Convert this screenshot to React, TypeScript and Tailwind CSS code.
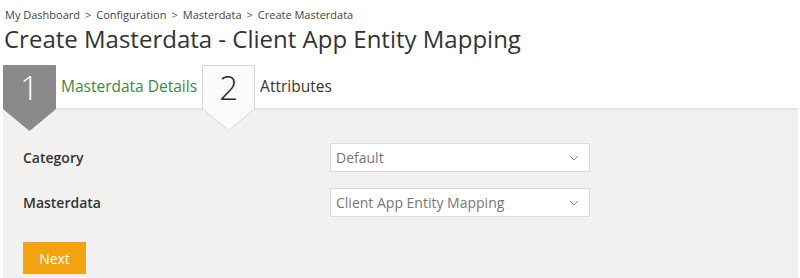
import React from 'react'

const font = { fontFamily: '"Open Sans", "Noto Sans", sans-serif' }

const crumbs = ['My Dashboard', 'Configuration', 'Masterdata', 'Create Masterdata']

function StepBadge({ num, active }: { num: string; active: boolean }) {
  return (
    <div className="relative w-[53px] h-[66px] shrink-0">
      <svg width="53" height="66" viewBox="0 0 53 66" className="absolute inset-0">
        <polygon
          points="0.5,0.5 52.5,0.5 52.5,44 26.5,65.5 0.5,44"
          fill={active ? '#8a8a8a' : '#fbfbfb'}
          stroke={active ? '#8a8a8a' : '#d6d6d6'}
          strokeWidth="1"
        />
      </svg>
      <div
        className={`absolute left-0 top-[3px] w-[53px] text-center text-[33px] font-light leading-[40px] ${
          active ? 'text-white' : 'text-[#2b2b2b]'
        }`}
      >
        {num}
      </div>
    </div>
  )
}

function Select({ value }: { value: string }) {
  return (
    <div className="w-[260px] h-[29px] bg-white border border-[#dcdcdc] flex items-center justify-between pl-[5px] pr-[10px]">
      <span className="text-[14px] text-[#777]">{value}</span>
      <svg width="10" height="6" viewBox="0 0 10 6">
        <path d="M1 1 L5 5 L9 1" fill="none" stroke="#888" strokeWidth="1" />
      </svg>
    </div>
  )
}

export default function App() {
  return (
    <div className="w-[800px] h-[278px] overflow-hidden bg-white text-[#333]" style={font}>
      <div className="pl-[5px] pt-[7px] text-[11px] leading-[16px] text-[#444] flex gap-[5px]">
        {crumbs.map((c, i) => (
          <span key={i} className="flex gap-[5px]">
            {i > 0 && <span className="text-[#555]">&gt;</span>}
            {c}
          </span>
        ))}
      </div>
      <h1 className="pl-[4px] pt-[1px] text-[24px] leading-[30px] font-normal text-[#333]">
        Create Masterdata - Client App Entity Mapping
      </h1>
      <div className="relative z-10 flex items-start pl-[3px] mt-[11px]">
        <StepBadge num="1" active />
        <div className="h-[44px] flex items-center pl-[5px] pr-[5px] text-[15.5px] text-[#3d8a3d]">
          Masterdata Details
        </div>
        <StepBadge num="2" active={false} />
        <div className="h-[44px] flex items-center pl-[5px] text-[15.5px] text-[#333]">
          Attributes
        </div>
      </div>
      <div className="mt-[-23px] ml-[3px] mr-[2px] h-[200px] bg-[#f2f1f0] border-t-2 border-[#e6e5e3] pl-[20px] pt-[33px]">
        <div className="flex flex-col gap-[16px]">
          <div className="flex items-center">
            <div className="w-[307px] text-[14px] font-semibold text-[#333]">Category</div>
            <Select value="Default" />
          </div>
          <div className="flex items-center">
            <div className="w-[307px] text-[14px] font-semibold text-[#333]">Masterdata</div>
            <Select value="Client App Entity Mapping" />
          </div>
        </div>
        <button className="mt-[25px] w-[63px] h-[32px] bg-[#f2a30f] text-white text-[14px]">
          Next
        </button>
      </div>
    </div>
  )
}
